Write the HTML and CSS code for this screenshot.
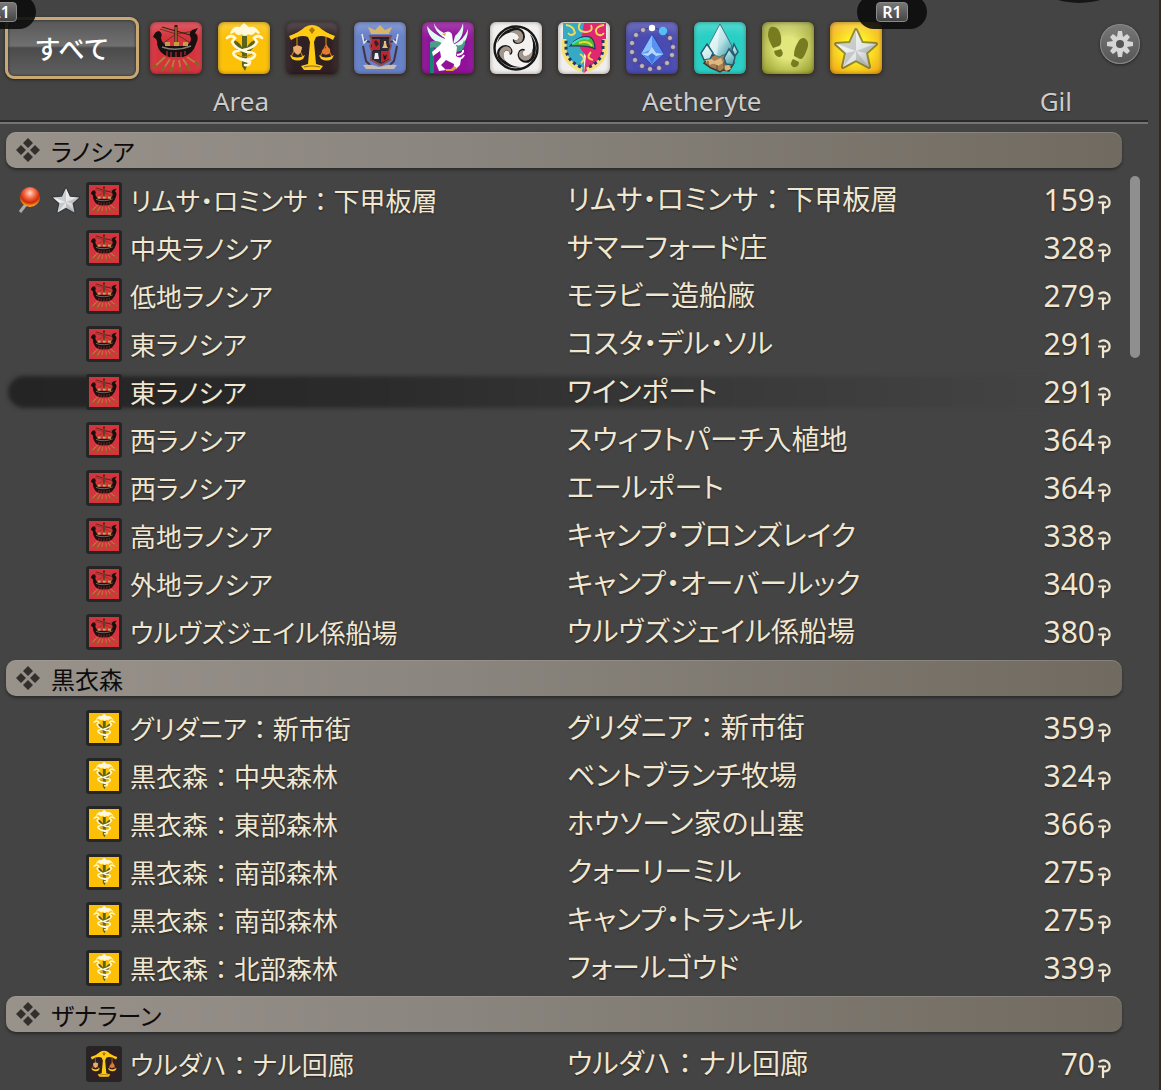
FILE: index.html
```
<!DOCTYPE html>
<html lang="ja">
<head>
<meta charset="utf-8">
<title>Teleport</title>
<link rel="stylesheet" href="styles.css">
</head>
<body>
  <svg class="defs" aria-hidden="true">
    <defs>
      <radialGradient id="pinball" cx="50%" cy="30%" r="65%">
        <stop offset="0" stop-color="#ffd9c8"/><stop offset=".45" stop-color="#f2603a"/><stop offset=".75" stop-color="#c92c06"/><stop offset="1" stop-color="#ff9a1c"/>
      </radialGradient>
      <linearGradient id="silver" x1="0" y1="0" x2="1" y2="1">
        <stop offset="0" stop-color="#fff"/><stop offset=".6" stop-color="#e2e5e5"/><stop offset="1" stop-color="#a8abae"/>
      </linearGradient>
      <linearGradient id="ice" x1="0" y1="0" x2="1" y2="1">
        <stop offset="0" stop-color="#f2ffff"/><stop offset=".55" stop-color="#b8e2e4"/><stop offset="1" stop-color="#2f93a8"/>
      </linearGradient>
    </defs>
    <symbol id="ship" viewBox="0 0 52 52">
      <path d="M10 7 26 12 45 9M26 12 12 22M26 12 42 22" fill="none" stroke="#5c3a1c" stroke-width="1"/>
      <path d="M12 5 40 13" stroke="#3a2014" stroke-width="1.2"/>
      <path d="M15 35 3 46M20 37 12 49M24 38 21 50M29 38 31 50M33 37 40 48M37 35 49 43" stroke="#b08338" stroke-width="1.8"/>
      <path d="M3 46l3-3M12 49l2-5M21 50l1-5M31 50l-1-5M40 48l-3-5M49 43l-4-3" stroke="#8a6228" stroke-width="3"/>
      <path d="M3 15Q5 9 9 9Q13 11 11 16Q12 22 18 24H35Q41 22 41 16Q38 11 42 8L48 6 45 11Q50 14 46 22Q43 32 33 35H19Q9 32 7 22Q8 17 3 15Z" fill="#18100f"/>
      <path d="M26 3V25" stroke="#2b1810" stroke-width="3"/>
      <path d="M26 5V23" stroke="#bb8a36" stroke-width="1.2"/>
      <path d="M15 20h5v4h-5zM24 20h5v4h-5zM33 20h5v4h-5z" fill="#c89b47"/>
      <path d="M12 25Q26 30 41 24" fill="none" stroke="#857d78" stroke-width="1.4"/>
      <path d="M17 29v5M21 30v5M26 30v5M31 30v5M35 29v4" stroke="#d2323f" stroke-width="1"/>
    </symbol>
    <symbol id="lily" viewBox="0 0 52 52">
      <path d="M24 14h5v30l-2 5-3-5zM24 31Q16 28 16 18Q24 21 25 29zM29 31Q37 28 37 18Q29 21 28 29z" fill="#59631a"/>
      <path d="M13 11Q16 4 22 6L26 2 31 6Q37 4 41 11L37 9Q34 14 30 11Q27 15 24 11Q19 14 17 9Z" fill="#fff8dc" stroke="#fff8dc" stroke-width="1.6" stroke-linejoin="round"/>
      <path d="M9 16Q13 12 17 16L14 20Q17 27 29 30Q40 31 36 35Q32 39 24 37M44 16Q40 12 36 16L39 20Q36 26 25 28Q13 29 16 33Q21 38 32 40Q32 44 27 43" fill="none" stroke="#fff8dc" stroke-width="2.6" stroke-linecap="round"/>
      <path d="M19 33Q26 37 34 32" fill="none" stroke="#9d8422" stroke-width="1"/>
    </symbol>
    <symbol id="scales" viewBox="0 0 52 52">
      <path d="M3 14Q14 10 19 5Q26 1 33 5Q38 10 49 14L47 18Q37 12 30 15L28 20 30 42 37 44 34 48H18L15 44 22 42 24 20 22 15Q15 12 5 18Z" fill="#ffcc13"/>
      <path d="M23 8l3-3 3 3-3 4z" fill="#ad760b"/>
      <path d="M11 15v8M5 35l6-12 6 12M40 15v8M34 35l6-12 6 12" fill="none" stroke="#b47b18" stroke-width="1.3"/>
      <path d="M4 33q7 5 15 0l-2 4q-5 3-11 0zM33 33q7 5 15 0l-2 4q-5 3-11 0z" fill="#ffcc13"/>
      <path d="M7 25q5-3 9 0 0 5-4 8-5-2-5-8z" fill="#e9ad69"/>
      <path d="M40 22l2 3q4 3 1 7-4 2-7-1-1-4 4-5z" fill="#e87932"/>
      <path d="M18 45Q26 43 34 45" fill="none" stroke="#9b6610" stroke-width="1.2"/>
    </symbol>
    <symbol id="star" viewBox="0 0 52 52">
      <path d="M26 8 32 21 46 22 36 31 39 45 26 38 13 45 16 31 6 22 20 21Z" fill="none" stroke="#26303c" stroke-width="4" stroke-linejoin="round" opacity=".5"/>
      <path d="M26 8 32 21 46 22 36 31 39 45 26 38 13 45 16 31 6 22 20 21Z" fill="url(#silver)"/>
      <path d="M26 9V29L20 21ZM45 22 26 29 36 31ZM38 44 26 29 26 38ZM14 44 26 29 16 31ZM7 22 26 29 20 21Z" fill="#777d80" opacity=".3"/>
    </symbol>
    <symbol id="gil" viewBox="0 0 14 21">
      <path d="M2 4Q5 2 8 2.6Q12.6 4 12.6 8.5Q12.6 13.4 7 13.4M1 8.5H9M6 8.5V20" fill="none" stroke="currentColor" stroke-width="2.2"/>
    </symbol>
    <symbol id="diamonds" viewBox="0 0 24 24">
      <path d="M12 0 17 5 12 10 7 5ZM5 7 10 12 5 17 0 12ZM19 7 24 12 19 17 14 12ZM12 14 17 19 12 24 7 19Z" fill="#322f2c"/>
    </symbol>
  </svg>

  <main class="window">
    <nav class="toolbar">
      <button class="all">すべて<span class="key key-left"><kbd>L1</kbd></span></button>
      <div class="filters">
        <button class="filter red" aria-label="ラノシア"><svg><use href="#ship"/></svg></button>
        <button class="filter yellow" aria-label="黒衣森"><svg><use href="#lily"/></svg></button>
        <button class="filter dark" aria-label="ザナラーン"><svg><use href="#scales"/></svg></button>
        <button class="filter blue" aria-label="イシュガルド">
          <svg viewBox="0 0 52 52">
            <path d="M17 12 14 5l7 3 5-5 5 5 7-3-3 7z" fill="#d8b66a"/>
            <path d="M9 18l7 2M43 18l-7 2M9 24l3 15 4 4M43 24l-3 15-4 4" stroke="#403445" stroke-width="2" fill="none"/>
            <path d="M16 14h21l-2 5 2 5-2 5 1 9-9 5-10-5 1-9-2-5 2-5z" fill="#242331" stroke="#8c4a52" stroke-width="2"/>
            <path d="M18 17h8v11h-8zM27 29h8v8l-8 4z" fill="#b92730"/>
            <path d="M27 17h8v11h-8zM18 29h8v12l-8-4z" fill="#312b3a"/>
            <path d="M20 20l2-2 3 4-3 3z" fill="#35221f"/>
            <path d="M28 26q2-2 2-7h2q0 5 2 7z" fill="#e5c276"/>
            <path d="M20 37l1-6h3l1 6z" fill="#eee"/>
            <path d="M29 32l2 2 2-2-1 5-2 1z" fill="#21151a"/>
            <path d="M9 43q9-1 16 2 9-3 18-2l-3 4H12z" fill="#c8bdae"/>
            <path d="M8 12l2 9 3-3M44 12l-2 9-3-3" fill="none" stroke="#dfe3ed" stroke-width="1.5"/>
          </svg>
        </button>
        <button class="filter purple" aria-label="ギラバニア">
          <svg viewBox="0 0 52 52">
            <path d="M10 20V51" stroke="#16866e" stroke-width="4"/>
            <path d="M5 4q1 14 15 18l3-5Q11 12 5 4zM12 1q0 9 11 15l-1-5Q14 7 12 1zM41 1q-2 8-8 13l-2 8q12-5 10-21zM46 7q0 16-14 21l-1-5Q42 18 46 7z" fill="#dffaf2"/>
            <path d="M8 20q8-3 14 3l-4 5q-5-4-10-2zM34 23q7 2 8-5 3 5-3 11l-7 1z" fill="#4c9b8b"/>
            <path d="M20 12q7-5 10 0l1 9 4 4-1 9 5 3-1 6-4 4q-3-1-2-5l-8-4-5 5 5 5-7 1-3-8 5-6-1-6-7 5-1-4 8-7 5-7-3-2z" fill="#fff"/>
            <path d="M35 33q7-1 6-5M33 36q7 2 9-3" fill="none" stroke="#fff" stroke-width="2"/>
            <path d="M20 12l4-1-1 3zM24 47h5l3-3 3 2-4 3h-7z" fill="#d5a53e"/>
          </svg>
        </button>
        <button class="filter white" aria-label="ひんがしの国">
          <svg viewBox="0 0 52 52">
            <circle cx="26" cy="26" r="21.5" fill="#f4f2f0" stroke="#171717" stroke-width="2.4"/>
            <g id="comma">
              <path d="M7 21Q11 8 25 5.500Q35 6 35 15Q34 22 27 22Q22 21 23 17Q27 20 29 16Q29 11 22 10Q12 12 7 21Z" fill="#171717"/>
              <path d="M20 10Q30 5 33 13Q34 20 28 21Q25 21 24 18Q29 19 29 15Q27 11 20 10Z" fill="#a4968b"/>
            </g>
            <use href="#comma" transform="rotate(120 26 26)"/>
            <use href="#comma" transform="rotate(240 26 26)"/>
          </svg>
        </button>
        <button class="filter white" aria-label="トラル">
          <svg viewBox="0 0 52 52">
            <path d="M5 1H26V51L16 43Q5 38 5 27Z" fill="#36a9c4"/>
            <path d="M26 1H48V27Q47 38 36 43L26 51L28 34 22 26Z" fill="#df286f"/>
            <path d="M24 48Q8 42 6 28V17M29 48Q45 42 47 28V17" fill="none" stroke="#f3e27c" stroke-width="5"/>
            <path d="M23 45Q9 39 8 27V17M31 45Q44 39 45 27V17" fill="none" stroke="#26356b" stroke-width="3" stroke-dasharray="3 3"/>
            <path d="M8 3q8 1 9 8-4 4-7 0M22 1q-4 8 5 9 9 0 6-7M46 3q-11 2-7 9 4 3 7-1M22 32q7 4 1 9M33 30q-6 6 2 8" fill="none" stroke="#f4db57" stroke-width="1.8"/>
            <path d="M12 24Q20 13 32 15Q37 18 37 27Q31 23 12 24Z" fill="#58b53a" stroke="#28365e" stroke-width="1.2"/>
            <path d="M14 22q10-8 17-5" fill="none" stroke="#3be1cf" stroke-width="2"/>
            <path d="M21 21q9-3 13 3" fill="none" stroke="#dcdf30" stroke-width="2"/>
          </svg>
        </button>
        <button class="filter indigo" aria-label="エーテライト">
          <svg viewBox="0 0 52 52">
            <circle cx="26" cy="26" r="20" fill="none" stroke="#394087"/>
            <g fill="#c4b6b2" stroke="#34306b" stroke-width=".5">
              <circle cx="17" cy="8" r="2.500"/><circle cx="10" cy="13" r="2.500"/><circle cx="6" cy="21" r="2.500"/><circle cx="6" cy="30" r="2.500"/><circle cx="9" cy="38" r="2.500"/><circle cx="16" cy="44" r="2.500"/><circle cx="24" cy="47" r="2.500"/><circle cx="33" cy="46" r="2.500"/><circle cx="41" cy="41" r="2.500"/><circle cx="46" cy="33" r="2.500"/><circle cx="47" cy="25" r="2.500"/><circle cx="44" cy="16" r="2.500"/>
            </g>
            <circle cx="26" cy="6" r="3.2" fill="#fff"/>
            <circle cx="37" cy="9" r="4.2" fill="#54bef5"/>
            <path d="M26 12 38 32 26 43 15 32Z" fill="#5a91ee" stroke="#2c46b6"/>
            <path d="M26 13V27L15 32Z" fill="#88c0ff"/>
            <path d="M26 25 30 31 38 32 30 34 26 43 22 34 15 32 22 31Z" fill="#b8d9ff"/>
            <path d="M26 43 22 34 26 31 30 34Z" fill="#4376de"/>
          </svg>
        </button>
        <button class="filter cyan" aria-label="都市内エーテライト">
          <svg viewBox="0 0 52 52">
            <path d="M14 36l9-5 13 1 4 9-5 8-6-1-3 2-4-2-5-2-7-5z" fill="#a67f54" stroke="#43332b" stroke-width="1.5"/>
            <path d="M26 2 38 24 34 31 25 35 16 30 15 23Z" fill="url(#ice)" stroke="#3d727b"/>
            <path d="M26 3 23 34 16 29 15 23Z" fill="#fff" opacity=".45"/>
            <path d="M13 22 19 31 16 37 10 38 7 31ZM35 27 41 35 39 43 32 42 30 36ZM40 22 44 30 41 34 38 28Z" fill="url(#ice)" stroke="#245d70" stroke-width="1.5"/>
            <path d="M11 38l7-1 4 4-7 2zM18 40l9-4 2 5-5 3zM29 44l6-1 2 4-5 2z" fill="#dfb880"/>
            <path d="M14 39v5M23 43v6M30 40v9" stroke="#594735"/>
          </svg>
        </button>
        <button class="filter green" aria-label="履歴">
          <svg viewBox="0 0 52 52" fill="#777c20">
            <path d="M9 5Q17 3 19 15Q20 23 17 24L11 26Q7 19 6 14Q6 7 9 5ZM12 29 19 27Q23 33 18 35Q13 35 12 29Z"/>
            <path d="M42 16Q49 19 44 30Q41 38 38 37L32 34Q32 27 35 22Q38 15 42 16ZM31 37 37 40Q37 46 31 45Q27 42 31 37Z"/>
          </svg>
        </button>
        <button class="filter gold" aria-label="お気に入り"><svg><use href="#star"/></svg><span class="key key-right"><kbd>R1</kbd></span></button>
      </div>
      <button class="settings" aria-label="設定">
        <svg viewBox="0 0 40 40">
          <path d="M18 7h4l1 6 4-3 3 3-3 4 6 1v4l-6 1 3 4-3 3-4-3-1 6h-4l-1-6-4 3-3-3 3-4-6-1v-4l6-1-3-4 3-3 4 3z" fill="#d6d6d6"/>
          <circle cx="20" cy="20" r="4" fill="#555"/>
        </svg>
      </button>
      <span class="shade"></span>
    </nav>

    <table class="list">
      <colgroup>
        <col class="col-area"><col><col class="col-gil"><col class="col-scroll">
      </colgroup>
      <thead>
        <tr><th>Area</th><th>Aetheryte</th><th>Gil</th><th></th></tr>
      </thead>
      <tbody>
        <tr class="region">
          <th colspan="3"><div><svg><use href="#diamonds"/></svg>ラノシア</div></th>
          <td class="scroll" rowspan="11"><div class="thumb"></div></td>
        </tr>
        <tr>
          <td><div class="area">
            <span class="marks">
              <svg class="pin" viewBox="0 0 24 32"><path d="M10 19 3 28" stroke="#aaa" stroke-width="3"/><circle cx="13" cy="13" r="10" fill="url(#pinball)"/></svg>
              <svg class="fav"><use href="#star"/></svg>
            </span>
            <svg class="flag red"><use href="#ship"/></svg>リムサ・ロミンサ<i>：</i>下甲板層</div></td>
          <td>リムサ・ロミンサ<i>：</i>下甲板層</td>
          <td>159<svg><use href="#gil"/></svg></td>
        </tr>
        <tr>
          <td><div class="area"><span class="marks"></span><svg class="flag red"><use href="#ship"/></svg>中央ラノシア</div></td>
          <td>サマーフォード庄</td>
          <td>328<svg><use href="#gil"/></svg></td>
        </tr>
        <tr>
          <td><div class="area"><span class="marks"></span><svg class="flag red"><use href="#ship"/></svg>低地ラノシア</div></td>
          <td>モラビー造船廠</td>
          <td>279<svg><use href="#gil"/></svg></td>
        </tr>
        <tr>
          <td><div class="area"><span class="marks"></span><svg class="flag red"><use href="#ship"/></svg>東ラノシア</div></td>
          <td>コスタ・デル・ソル</td>
          <td>291<svg><use href="#gil"/></svg></td>
        </tr>
        <tr class="selected">
          <td><div class="area"><span class="marks"></span><svg class="flag red"><use href="#ship"/></svg>東ラノシア</div></td>
          <td>ワインポート</td>
          <td>291<svg><use href="#gil"/></svg></td>
        </tr>
        <tr>
          <td><div class="area"><span class="marks"></span><svg class="flag red"><use href="#ship"/></svg>西ラノシア</div></td>
          <td>スウィフトパーチ入植地</td>
          <td>364<svg><use href="#gil"/></svg></td>
        </tr>
        <tr>
          <td><div class="area"><span class="marks"></span><svg class="flag red"><use href="#ship"/></svg>西ラノシア</div></td>
          <td>エールポート</td>
          <td>364<svg><use href="#gil"/></svg></td>
        </tr>
        <tr>
          <td><div class="area"><span class="marks"></span><svg class="flag red"><use href="#ship"/></svg>高地ラノシア</div></td>
          <td>キャンプ・ブロンズレイク</td>
          <td>338<svg><use href="#gil"/></svg></td>
        </tr>
        <tr>
          <td><div class="area"><span class="marks"></span><svg class="flag red"><use href="#ship"/></svg>外地ラノシア</div></td>
          <td>キャンプ・オーバールック</td>
          <td>340<svg><use href="#gil"/></svg></td>
        </tr>
        <tr>
          <td><div class="area"><span class="marks"></span><svg class="flag red"><use href="#ship"/></svg>ウルヴズジェイル係船場</div></td>
          <td>ウルヴズジェイル係船場</td>
          <td>380<svg><use href="#gil"/></svg></td>
        </tr>
      </tbody>
      <tbody>
        <tr class="region">
          <th colspan="3"><div><svg><use href="#diamonds"/></svg>黒衣森</div></th>
        </tr>
        <tr>
          <td><div class="area"><span class="marks"></span><svg class="flag yellow"><use href="#lily"/></svg>グリダニア<i>：</i>新市街</div></td>
          <td>グリダニア<i>：</i>新市街</td>
          <td>359<svg><use href="#gil"/></svg></td>
        </tr>
        <tr>
          <td><div class="area"><span class="marks"></span><svg class="flag yellow"><use href="#lily"/></svg>黒衣森<i>：</i>中央森林</div></td>
          <td>ベントブランチ牧場</td>
          <td>324<svg><use href="#gil"/></svg></td>
        </tr>
        <tr>
          <td><div class="area"><span class="marks"></span><svg class="flag yellow"><use href="#lily"/></svg>黒衣森<i>：</i>東部森林</div></td>
          <td>ホウソーン家の山塞</td>
          <td>366<svg><use href="#gil"/></svg></td>
        </tr>
        <tr>
          <td><div class="area"><span class="marks"></span><svg class="flag yellow"><use href="#lily"/></svg>黒衣森<i>：</i>南部森林</div></td>
          <td>クォーリーミル</td>
          <td>275<svg><use href="#gil"/></svg></td>
        </tr>
        <tr>
          <td><div class="area"><span class="marks"></span><svg class="flag yellow"><use href="#lily"/></svg>黒衣森<i>：</i>南部森林</div></td>
          <td>キャンプ・トランキル</td>
          <td>275<svg><use href="#gil"/></svg></td>
        </tr>
        <tr>
          <td><div class="area"><span class="marks"></span><svg class="flag yellow"><use href="#lily"/></svg>黒衣森<i>：</i>北部森林</div></td>
          <td>フォールゴウド</td>
          <td>339<svg><use href="#gil"/></svg></td>
        </tr>
      </tbody>
      <tbody>
        <tr class="region">
          <th colspan="3"><div><svg><use href="#diamonds"/></svg>ザナラーン</div></th>
        </tr>
        <tr>
          <td><div class="area"><span class="marks"></span><svg class="flag dark"><use href="#scales"/></svg>ウルダハ<i>：</i>ナル回廊</div></td>
          <td>ウルダハ<i>：</i>ナル回廊</td>
          <td>70<svg><use href="#gil"/></svg></td>
        </tr>
      </tbody>
    </table>
  </main>
</body>
</html>
```

FILE: styles.css
```
* {
  box-sizing: border-box;
}
body {
  margin: 0;
  background: #444444;
  color: #f1e7d0;
  font-family: "Noto Sans CJK JP", sans-serif;
  overflow-x: hidden;
}
.defs {
  position: absolute;
  width: 0;
  height: 0;
}
.window {
  position: relative;
  isolation: isolate;
  min-height: 100vh;
  padding-right: 11px;
  border-right: 2px solid #2f2a25;
  overflow: hidden;
}
button {
  position: relative;
  border: none;
  padding: 0;
  font-family: inherit;
  cursor: pointer;
}

/* toolbar */
.toolbar {
  display: flex;
  align-items: center;
  gap: 11px;
  height: 80px;
  padding: 16px 8px 0 5px;
}
.all {
  width: 134px;
  height: 62px;
  border: 3px solid #c9a873;
  border-radius: 9px;
  background: linear-gradient(#575757, #707070 46%, #4b4b4b 50%, #606060);
  box-shadow: 0 1px 3px #222, inset 0 0 3px #222;
  color: #ffffff;
  font-size: 26px;
  font-weight: 500;
  line-height: 48px;
}
.filters {
  display: flex;
  gap: 16px;
}
.filter {
  width: 52px;
  height: 52px;
  border-radius: 6px;
  box-shadow: 0 1px 4px #2b1c10, inset 0 0 4px rgba(0, 0, 0, 0.4), inset 0 8px 8px rgba(255, 255, 255, 0.2);
}
.filter svg {
  display: block;
  width: 52px;
  height: 52px;
}
.red { background-color: #d7333f; }
.yellow { background-color: #fcc006; }
.dark { background-color: #2f2024; }
.blue { background-color: #6680c8; }
.purple { background-color: #91119a; }
.white { background-color: #f0efed; }
.indigo { background-color: #4a4bb0; }
.cyan { background-color: #27cfc4; }
.green { background: radial-gradient(#e2e67c 30%, #8c9420); }
.gold { background: radial-gradient(#fff22c 30%, #ee9a0c); }

/* shoulder button hints */
.key {
  position: absolute;
  display: flex;
  justify-content: center;
  width: 70px;
  height: 34px;
  padding-top: 7px;
  border-radius: 17px;
  background: rgba(12, 12, 12, 0.9);
}
.key-left {
  top: -25px;
  left: -42px;
}
.key-right {
  top: -27px;
  left: 27px;
}
.key kbd {
  width: 32px;
  height: 20px;
  border: 1px solid #8a8a8a;
  border-radius: 4px;
  background: linear-gradient(#777777, #454545);
  color: #ffffff;
  font: 600 16px/18px "Noto Sans", sans-serif;
  text-align: center;
}
.settings {
  width: 40px;
  height: 40px;
  margin: 0 0 8px auto;
  border-radius: 50%;
  background: linear-gradient(#777777, #565656);
  box-shadow: 0 1px 3px #222, inset 0 0 0 1px #888888;
}
.settings svg {
  display: block;
}
.shade {
  position: absolute;
  top: -27px;
  right: 45px;
  width: 70px;
  height: 30px;
  border-radius: 50%;
  background: #161616;
}

/* list */
.list {
  width: 100%;
  table-layout: fixed;
  border-spacing: 0;
}
.col-area { width: 567px; }
.col-gil { width: 140px; }
.col-scroll { width: 26px; }
.list th,
.list td {
  padding: 0;
  font-weight: 400;
  text-align: left;
  white-space: nowrap;
}
.list thead th {
  height: 44px;
  border-bottom: 2px solid #747474;
  box-shadow: inset 0 -2px #2a2a2a;
  color: #cccccc;
  font-family: "Noto Sans", sans-serif;
  font-size: 26px;
  line-height: 42px;
  text-shadow: 0 1px 1px #222;
}
.list thead th:nth-child(1) { padding-left: 213px; }
.list thead th:nth-child(2) { padding-left: 75px; }
.list thead th:nth-child(3) { padding-right: 50px; text-align: right; }

.list .region th {
  padding: 4px 0 8px 6px;
}
.list tbody:nth-of-type(1) .region th {
  padding-top: 8px;
}
.region div {
  display: flex;
  align-items: center;
}
.region th div {
  gap: 11px;
  height: 36px;
  padding-left: 10px;
  border-radius: 10px;
  background: linear-gradient(90deg, #98928b, #8a857e 40%, #706a60);
  box-shadow: 0 2px 3px #2b2b2b, inset 0 1px #aaa49b66;
  color: #0c0c0c;
  font-size: 24px;
  font-feature-settings: "palt";
}
.region svg {
  width: 24px;
  height: 24px;
}
.list .scroll {
  padding-top: 52px;
  vertical-align: top;
}
.thumb {
  width: 10px;
  height: 182px;
  margin-left: 8px;
  border-radius: 5px;
  background: #8f8f8f;
}
.list tbody tr:not(.region) td {
  height: 48px;
  font-size: 28px;
  line-height: 44px;
  font-feature-settings: "palt";
  text-shadow: 0 1px 2px #222;
}
.list tbody tr:not(.region) td:nth-child(2) {
  padding-bottom: 4px;
}
.area {
  display: flex;
  align-items: center;
  font-size: 26px;
  line-height: 40px;
}
.marks {
  display: flex;
  align-items: center;
  gap: 8px;
  width: 86px;
  padding-left: 17px;
}
.pin {
  width: 24px;
  height: 32px;
}
.fav {
  width: 34px;
  height: 34px;
}
.flag {
  flex: none;
  width: 36px;
  height: 36px;
  margin-right: 8px;
  border: 3px solid #252525;
  border-radius: 3px;
}
i {
  font-style: normal;
  font-feature-settings: "palt" 0;
}
.list tbody tr:not(.region) td:nth-child(3) {
  padding-right: 11px;
  font-family: "Noto Sans", sans-serif;
  font-size: 30px;
  text-align: right;
}
td:nth-child(3) svg {
  width: 14px;
  height: 21px;
  margin-left: 2px;
  vertical-align: -4px;
}
.selected td:first-child {
  position: relative;
}
.selected td:first-child::before {
  content: "";
  position: absolute;
  top: 8px;
  bottom: 8px;
  left: 8px;
  z-index: -1;
  width: 185%;
  border-radius: 16px;
  background: linear-gradient(90deg, #242424, #2b2b2b 35%, #3a3a3a 70%, #444444);
  filter: blur(2px);
}
```
